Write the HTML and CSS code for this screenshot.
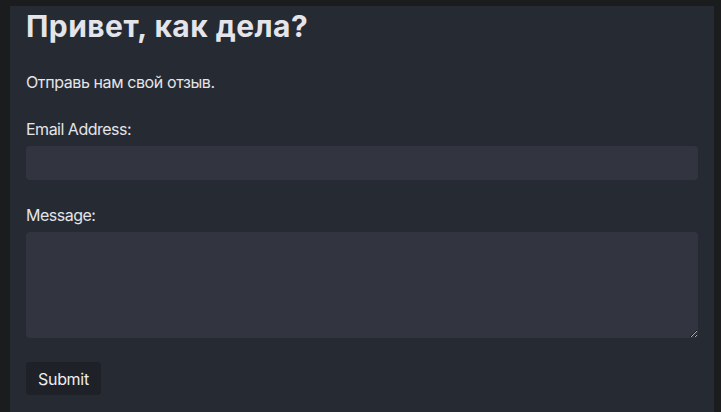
FILE: index.html
```html
<!DOCTYPE html>
<html lang="ru">
<head>
<meta charset="utf-8">
<title>Feedback</title>
<link rel="stylesheet" href="styles.css">
</head>
<body>
<main class="panel">
  <h1 class="title">Привет, как дела?</h1>
  <p class="intro">Отправь нам свой отзыв.</p>
  <form class="form">
    <label class="label" for="email">Email Address:</label>
    <input class="field" id="email" type="email">
    <label class="label" for="msg">Message:</label>
    <textarea class="field area" id="msg"></textarea>
    <button class="submit" type="button">Submit</button>
  </form>
</main>
</body>
</html>
```
FILE: styles.css
```css
html, body {
  margin: 0;
  height: 100%;
  background: #1b1c1e;
  overflow: hidden;
}
body {
  padding: 6px 7px 0 10px;
  box-sizing: border-box;
  font-family: Inter, "Noto Sans", sans-serif;
  color: #e4e5e8;
}
.panel {
  background: #262a33;
  padding: 2px 16px 40px;
  min-height: 100%;
  box-sizing: border-box;
}
.title {
  margin: 0;
  font-size: 30px;
  font-weight: 700;
  line-height: 36px;
  letter-spacing: 0.45px;
  color: #e3e5ea;
}
.intro {
  margin: 28px 0 0;
  font-size: 16px;
  line-height: 20px;
  letter-spacing: -0.4px;
}
.form {
  display: flex;
  flex-direction: column;
  align-items: flex-start;
  margin-top: 27px;
}
.label {
  font-size: 16px;
  line-height: 20px;
  letter-spacing: -0.5px;
  margin-bottom: 7px;
}
.field {
  width: 100%;
  box-sizing: border-box;
  height: 34px;
  border: none;
  border-radius: 4px;
  background: #323540;
  color: #e4e5e8;
  margin: 0 0 25px;
  font: inherit;
  padding: 6px 10px;
}
.area {
  height: 106px;
  resize: vertical;
  margin-bottom: 24px;
}
.submit {
  font: inherit;
  font-size: 16px;
  letter-spacing: -0.3px;
  color: #eeeeee;
  background: #1f2128;
  border: none;
  border-radius: 4px;
  height: 33px;
  padding: 0 12px;
}
```
